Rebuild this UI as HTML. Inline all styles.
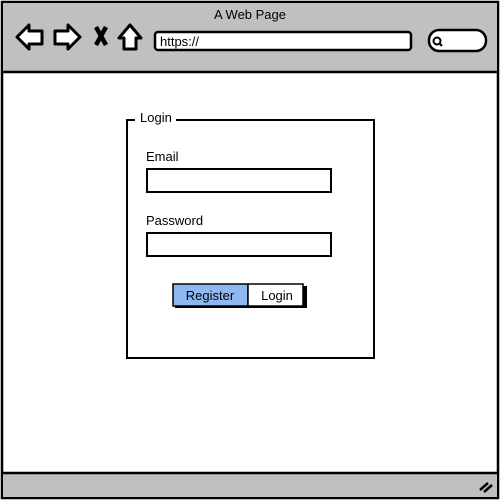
<!DOCTYPE html>
<html><head><meta charset="utf-8"><style>
body{margin:0;width:500px;height:500px;overflow:hidden;background:#fff}
svg{display:block}
text{font-family:"Liberation Sans",sans-serif;font-size:13px;fill:#000}
</style></head><body>
<svg width="500" height="500" viewBox="0 0 500 500">
<rect x="2" y="2" width="496" height="496" fill="#fff" stroke="#000" stroke-width="2.5"/>
<rect x="3" y="3" width="494" height="69" fill="#c0c0c0"/>
<line x1="2" y1="72" x2="498" y2="72" stroke="#000" stroke-width="2.5"/>
<rect x="3" y="473" width="494" height="24" fill="#c0c0c0"/>
<line x1="2" y1="473" x2="498" y2="473" stroke="#000" stroke-width="2.5"/>
<path d="M480 490 L488 483 M484 492 L492 485" stroke="#000" stroke-width="2.5"/>
<text x="250" y="19" text-anchor="middle" font-size="12">A Web Page</text>
<path d="M17 37 L29 25 L29 31 L42 31 L42 44 L29 44 L29 49 Z" fill="#fff" stroke="#000" stroke-width="3" stroke-linejoin="round"/>
<path d="M80 37 L68 25 L68 31 L55 31 L55 44 L68 44 L68 49 Z" fill="#fff" stroke="#000" stroke-width="3" stroke-linejoin="round"/>
<path d="M96 27 L106 45 M106 27 L96 45" stroke="#000" stroke-width="4.5"/>
<path d="M130 25 L119 38 L124 38 L124 49 L136 49 L136 38 L141 38 Z" fill="#fff" stroke="#000" stroke-width="3" stroke-linejoin="round"/>
<rect x="155" y="32" width="256" height="18" rx="3" fill="#fff" stroke="#000" stroke-width="2.5"/>
<text x="160" y="46">https://</text>
<rect x="429" y="30" width="57" height="21" rx="10" fill="#fff" stroke="#000" stroke-width="2.5"/>
<circle cx="437" cy="41" r="3.5" fill="none" stroke="#000" stroke-width="2"/>
<line x1="439" y1="43" x2="442" y2="46" stroke="#000" stroke-width="2"/>
<path d="M135 120 L127 120 L127 358 L374 358 L374 120 L176 120" fill="none" stroke="#000" stroke-width="2"/>
<text x="140" y="122">Login</text>
<text x="146" y="161">Email</text>
<rect x="147" y="169" width="184" height="23" fill="#fff" stroke="#000" stroke-width="2"/>
<text x="146" y="225">Password</text>
<rect x="147" y="233" width="184" height="23" fill="#fff" stroke="#000" stroke-width="2"/>
<rect x="175" y="286" width="132" height="22" fill="#000"/>
<rect x="173" y="284" width="75" height="22" fill="#8fb8f0" stroke="#000" stroke-width="1.5"/>
<rect x="248" y="284" width="55" height="22" fill="#fff" stroke="#000" stroke-width="1.5"/>
<text x="210" y="300" text-anchor="middle">Register</text>
<text x="277" y="300" text-anchor="middle">Login</text>
</svg>
</body></html>
